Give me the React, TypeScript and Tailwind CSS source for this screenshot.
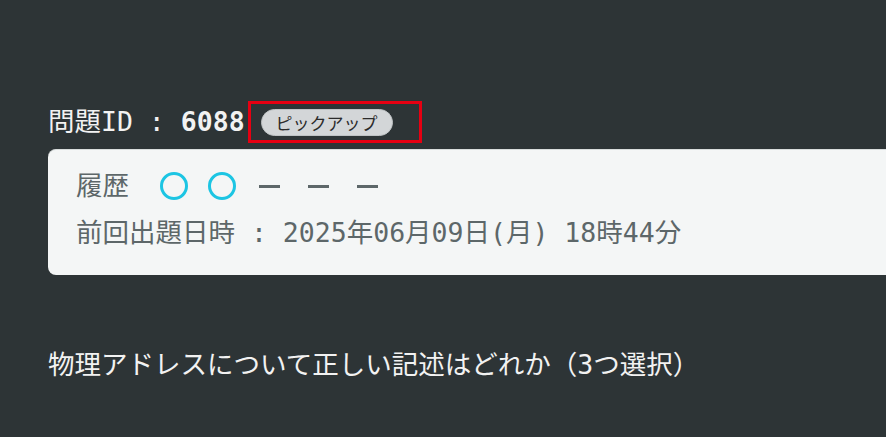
const FONT = "font-['DejaVu_Sans_Mono','Noto_Sans_CJK_JP',monospace]";

function History() {
  return (
    <div className="flex items-center h-[28px]">
      <span className="w-[84px]">履歴</span>
      <span className="w-[28px] h-[28px] rounded-full border-[3px] border-[#1cc5e3]" />
      <span className="ml-[20px] w-[28px] h-[28px] rounded-full border-[3px] border-[#1cc5e3]" />
      <span className="ml-[23px] w-[21px] h-[3px] bg-[#5d6769]" />
      <span className="ml-[28px] w-[21px] h-[3px] bg-[#5d6769]" />
      <span className="ml-[28px] w-[21px] h-[3px] bg-[#5d6769]" />
    </div>
  );
}

export default function App() {
  return (
    <div className={`w-[886px] h-[437px] overflow-hidden bg-[#2d3436] pl-[48px] pt-[101px] [text-spacing-trim:space-all] ${FONT}`}>
      <div className="flex items-center h-[42px] text-[26.5px] leading-none text-[#f2f2f2]">
        <span className="whitespace-pre">問題ID : </span>
        <span className="font-bold">6088</span>
        <div className="ml-[3px] w-[174px] h-[42px] border-[3px] border-[#e60012] flex items-center pl-[10px]">
          <span className="h-[27px] px-[14px] rounded-full bg-[#d3d6d8] border border-[#bfc3c5] text-[#2b2b2b] text-[17px] flex items-center font-['Noto_Sans_CJK_JP',sans-serif]">
            ピックアップ
          </span>
        </div>
      </div>

      <div className="mt-[6px] w-[860px] h-[126px] rounded-[8px] bg-[#f4f6f6] border-t border-[#d8dcdc] pl-[28px] pt-[22px] text-[26.5px] leading-none text-[#5d6769]">
        <History />
        <div className="mt-[19px] h-[28px] flex items-center whitespace-pre">
          前回出題日時 : 2025年06月09日(月) 18時44分
        </div>
      </div>

      <div className="mt-[77px] text-[26.5px] leading-[26px] text-[#f2f2f2]">
        物理アドレスについて正しい記述はどれか（3つ選択）
      </div>
    </div>
  );
}
